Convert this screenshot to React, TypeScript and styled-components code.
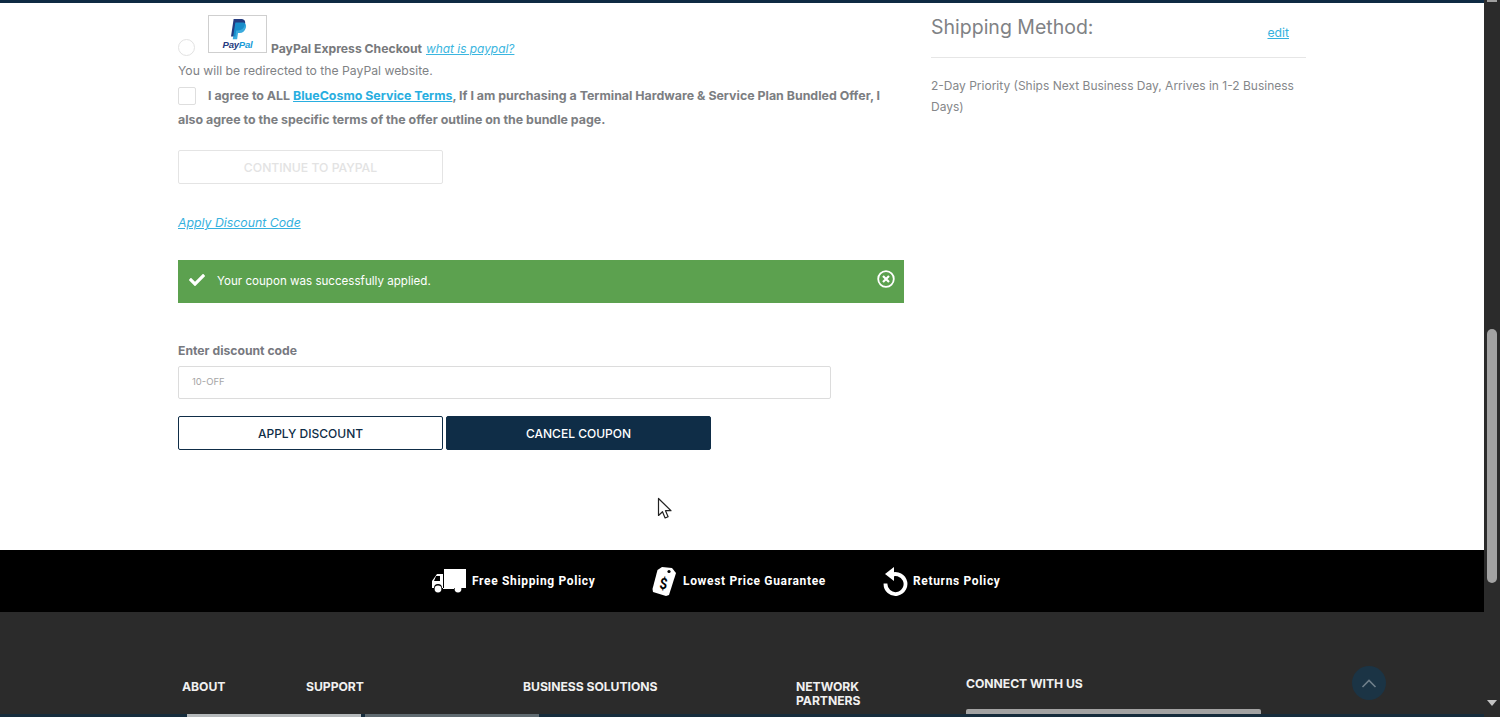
import React from "react";
import styled, { createGlobalStyle } from "styled-components";
import { FaCheck } from "react-icons/fa";

const Global = createGlobalStyle`
  html, body { margin: 0; padding: 0; height: 717px; overflow: hidden; background: #fff; }
  * { box-sizing: border-box; }
  body { font-family: Inter, "Liberation Sans", sans-serif; }
`;

const Page = styled.div`
  position: relative;
  display: flex;
  width: 1500px;
  height: 717px;
  overflow: hidden;
`;
const Main = styled.div`
  width: 1484px;
  display: flex;
  flex-direction: column;
  border-top: 3px solid #0e2a43;
`;
const Checkout = styled.div`
  height: 547px;
  flex: none;
  display: flex;
  padding-left: 178px;
`;
const LeftCol = styled.div`
  width: 726px;
  display: flex;
  flex-direction: column;
  padding-top: 12px;
`;
const RightCol = styled.div`
  width: 375px;
  margin-left: 27px;
`;
const PayRow = styled.div`
  display: flex;
  align-items: flex-end;
  height: 41px;
`;
const Radio = styled.span`
  width: 17px;
  height: 17px;
  border: 1px solid #e2e2e2;
  border-radius: 50%;
`;
const LogoBox = styled.div`
  width: 59px;
  height: 38px;
  margin: 0 4px 3px 13px;
  border: 1px solid #cfcfcf;
  display: flex;
  flex-direction: column;
  align-items: center;
  padding-top: 3px;
`;
const LogoText = styled.span`
  font-family: "Liberation Sans", sans-serif;
  font-size: 9.5px;
  line-height: 10px;
  font-weight: 700;
  font-style: italic;
  color: #253b80;
  letter-spacing: -0.2px;
  b { color: #179bd7; font-weight: 700; }
`;
const PayLabel = styled.span`
  font-size: 12.2px;
  line-height: 15px;
  font-weight: 700;
  color: #77797c;
`;
const WhatLink = styled.a`
  font-size: 11.9px;
  line-height: 15px;
  font-style: italic;
  color: #3bb6e0;
  text-decoration: underline;
  margin-left: 4px;
`;
const Redirect = styled.div`
  font-size: 12.2px;
  line-height: 16px;
  color: #808285;
  margin-top: 7px;
`;
const Terms = styled.div`
  position: relative;
  font-size: 12.4px;
  line-height: 24px;
  font-weight: 700;
  color: #7c7e82;
  text-indent: 30px;
  width: 726px;
  margin-top: 5px;
  a { color: #29aee0; text-decoration: underline; }
`;
const Check = styled.span`
  position: absolute;
  left: 0;
  top: 3px;
  width: 18px;
  height: 18px;
  border: 1px solid #dedede;
  border-radius: 2px;
`;
const GhostButton = styled.button`
  width: 265px;
  height: 34px;
  margin-top: 18px;
  background: #fff;
  border: 1px solid #e4e4e4;
  border-radius: 2px;
  font: 500 12.2px Inter, sans-serif;
  color: #e3e3e3;
  padding: 0;
`;
const ApplyLink = styled.a`
  font-size: 12.3px;
  line-height: 16px;
  font-style: italic;
  color: #35b1de;
  text-decoration: underline;
  margin-top: 31px;
  align-self: flex-start;
`;
const Alert = styled.div`
  height: 43px;
  margin-top: 29px;
  background: #5ca14f;
  color: #fff;
  display: flex;
  align-items: center;
  padding: 0 9px 0 11px;
  font-size: 11.6px;
  svg { flex: none; }
`;
const AlertText = styled.span`
  margin: 0 0 2px 12px;
  flex: 1;
`;
const AlertClose = styled.svg`
  margin-top: -5px;
`;
const FieldLabel = styled.label`
  font-size: 12.2px;
  line-height: 16px;
  font-weight: 700;
  color: #77797f;
  margin-top: 40px;
`;
const Input = styled.div`
  width: 653px;
  height: 33px;
  margin-top: 7px;
  border: 1px solid #dcdcdc;
  border-radius: 2px;
  padding-left: 13px;
  font-size: 9.5px;
  line-height: 29px;
  color: #a5a5a5;
`;
const Buttons = styled.div`
  display: flex;
  gap: 3px;
  margin-top: 17px;
`;
const ActionButton = styled.button<{ $solid?: boolean }>`
  width: 265px;
  height: 34px;
  border: 1px solid #0f2d47;
  border-radius: 2px;
  background: ${(p) => (p.$solid ? "#0f2d47" : "#fff")};
  color: ${(p) => (p.$solid ? "#fff" : "#0f2d47")};
  font: 500 12px Inter, sans-serif;
  padding: 0;
`;
const ShipHead = styled.div`
  display: flex;
  align-items: flex-end;
  justify-content: space-between;
  height: 55px;
  padding: 0 17px 16px 0;
  border-bottom: 1px solid #e6e6e6;
`;
const ShipTitle = styled.h3`
  margin: 0;
  font-size: 19.5px;
  line-height: 26px;
  font-weight: 400;
  color: #808285;
  position: relative;
  top: -1px;
`;
const EditLink = styled.a`
  font-size: 12.2px;
  line-height: 16px;
  color: #35b1de;
  text-decoration: underline;
`;
const ShipText = styled.p`
  margin: 17px 0 0;
  font-size: 12px;
  line-height: 21px;
  color: #85878a;
`;
const Strip = styled.div`
  height: 62px;
  flex: none;
  background: #000;
  display: flex;
  padding: 0 0 1px 431px;
  align-items: center;
`;
const Policy = styled.div<{ $w: number }>`
  width: ${(p) => p.$w}px;
  display: flex;
  align-items: center;
  color: #fff;
  font-family: Roboto, sans-serif;
  font-size: 12px;
  font-weight: 700;
  letter-spacing: 0.66px;
`;
const PolicyLabel = styled.span<{ $gap: number }>`
  margin-left: ${(p) => p.$gap}px;
`;
const Footer = styled.div`
  flex: 1;
  min-height: 0;
  background: #2b2b2b;
  display: flex;
  flex-direction: column;
`;
const FooterBody = styled.div`
  height: 102px;
  display: flex;
  padding: 68px 0 0 182px;
`;
const FootCol = styled.div<{ $w: number }>`
  width: ${(p) => p.$w}px;
  padding-right: 60px;
  color: #f0f0f0;
  font-size: 12.2px;
  line-height: 14px;
  font-weight: 700;
  letter-spacing: -0.05px;
`;
const BusinessCol = styled(FootCol)`
  padding-right: 0;
`;
const ConnectCol = styled.div`
  width: 295px;
  margin-top: -3px;
  display: flex;
  flex-direction: column;
  color: #f0f0f0;
  font-size: 12.2px;
  line-height: 14px;
  font-weight: 700;
  letter-spacing: -0.05px;
`;
const ConnectBar = styled.div`
  height: 7px;
  margin-top: 18px;
  background: #a3a3a3;
  border-radius: 2px 2px 0 0;
`;
const FooterEdge = styled.div`
  height: 3px;
  background: #162c3c;
  display: flex;
  gap: 4px;
  padding-left: 187px;
`;
const EdgeTab = styled.span<{ $c: string }>`
  width: 174px;
  height: 3px;
  background: ${(p) => p.$c};
`;
const ToTop = styled.div`
  position: absolute;
  left: 1352px;
  top: 666px;
  width: 34px;
  height: 34px;
  border-radius: 50%;
  background: #1b3445;
  display: flex;
  align-items: center;
  justify-content: center;
`;
const Scrollbar = styled.div`
  width: 16px;
  background: #2b2b2b;
  display: flex;
  flex-direction: column;
  align-items: center;
`;
const ScrollCap = styled.div`
  width: 10px;
  height: 2px;
  background: #a0a0a0;
`;
const Thumb = styled.div`
  width: 10px;
  height: 254px;
  margin-top: 327px;
  border-radius: 5px;
  background: #a3a3a3;
`;
const ScrollArrow = styled.svg`
  margin-top: 117px;
`;
const Cursor = styled.svg`
  position: absolute;
  left: 657px;
  top: 497px;
`;

export default function App() {
  return (
    <Page>
      <Global />
      <Main>
        <Checkout>
          <LeftCol>
            <PayRow>
              <Radio />
              <LogoBox>
                <svg width="20" height="21" viewBox="0 0 20 24">
                  <path d="M5 0h8c4 0 6 2 5 6-1 5-4 7-8 7H8l-1 7H2z" fill="#253b80" />
                  <path d="M7 4h8c3 0 5 2 4 6-1 4-4 6-7 6h-2l-1 7H4z" fill="#179bd7" opacity=".85" />
                </svg>
                <LogoText>Pay<b>Pal</b></LogoText>
              </LogoBox>
              <PayLabel>PayPal Express Checkout</PayLabel>
              <WhatLink>what is paypal?</WhatLink>
            </PayRow>
            <Redirect>You will be redirected to the PayPal website.</Redirect>
            <Terms>
              <Check />
              I agree to ALL <a>BlueCosmo Service Terms</a>, If I am purchasing a Terminal Hardware &amp; Service Plan Bundled Offer, I also agree to the specific terms of the offer outline on the bundle page.
            </Terms>
            <GhostButton>CONTINUE TO PAYPAL</GhostButton>
            <ApplyLink>Apply Discount Code</ApplyLink>
            <Alert>
              <FaCheck size={16} color="#fff" style={{ marginTop: -4 }} />
              <AlertText>Your coupon was successfully applied.</AlertText>
              <AlertClose width="18" height="18" viewBox="0 0 18 18" fill="none" stroke="#fff">
                <circle cx="9" cy="9" r="7.8" strokeWidth="1.8" />
                <path d="M6 6l6 6M12 6l-6 6" strokeWidth="2.2" />
              </AlertClose>
            </Alert>
            <FieldLabel>Enter discount code</FieldLabel>
            <Input>10-OFF</Input>
            <Buttons>
              <ActionButton>APPLY DISCOUNT</ActionButton>
              <ActionButton $solid>CANCEL COUPON</ActionButton>
            </Buttons>
          </LeftCol>
          <RightCol>
            <ShipHead>
              <ShipTitle>Shipping Method:</ShipTitle>
              <EditLink>edit</EditLink>
            </ShipHead>
            <ShipText>2-Day Priority (Ships Next Business Day, Arrives in 1-2 Business Days)</ShipText>
          </RightCol>
        </Checkout>
        <Strip>
          <Policy $w={221}>
            <svg width="36" height="26" viewBox="0 0 36 26" fill="#fff">
              <path d="M13 1h22v19H13z" />
              <path d="M11 6H6L1 13v7h2a4 4 0 0 1 8 0h1V6z" />
              <path d="M5 8h4v5H3z" fill="#000" />
              <circle cx="7" cy="21" r="3.4" />
              <circle cx="27" cy="21" r="3.4" />
              <path d="M12 20h11v1H12z" />
            </svg>
            <PolicyLabel $gap={5}>Free Shipping Policy</PolicyLabel>
          </Policy>
          <Policy $w={230}>
            <svg width="26" height="32" viewBox="0 0 26 32">
              <path d="M10 2l10 1 4 5-7 22-3 1-13-4-0.500-3 5-19z" fill="#fff" />
              <circle cx="17" cy="6.500" r="1.600" fill="#000" />
              <text x="7.500" y="24" fontSize="14" fontWeight="700" fontStyle="italic" fill="#000" fontFamily="Roboto, sans-serif">$</text>
            </svg>
            <PolicyLabel $gap={5}>Lowest Price Guarantee</PolicyLabel>
          </Policy>
          <Policy $w={130}>
            <svg width="26" height="30" viewBox="0 0 26 30" fill="none">
              <path d="M7.500 10a10 10 0 1 1-4 7.500" stroke="#fff" strokeWidth="3.800" />
              <path d="M12 1v14L3 8z" fill="#fff" />
            </svg>
            <PolicyLabel $gap={5}>Returns Policy</PolicyLabel>
          </Policy>
        </Strip>
        <Footer>
          <FooterBody>
            <FootCol $w={124}>ABOUT</FootCol>
            <FootCol $w={217}>SUPPORT</FootCol>
            <BusinessCol $w={273}>BUSINESS SOLUTIONS</BusinessCol>
            <FootCol $w={170}>NETWORK PARTNERS</FootCol>
            <ConnectCol>
              CONNECT WITH US
              <ConnectBar />
            </ConnectCol>
          </FooterBody>
          <FooterEdge>
            <EdgeTab $c="#b5b9bb" />
            <EdgeTab $c="#5f6a70" />
          </FooterEdge>
        </Footer>
      </Main>
      <Scrollbar>
        <ScrollCap />
        <Thumb />
        <ScrollArrow width="10" height="6" viewBox="0 0 10 6">
          <path d="M0 0h10L5 6z" fill="#c4c4c4" />
        </ScrollArrow>
      </Scrollbar>
      <ToTop>
        <svg width="16" height="9" viewBox="0 0 16 9" fill="none">
          <path d="M1.500 8L8 1.500 14.500 8" stroke="#6f7f8a" strokeWidth="1.600" />
        </svg>
      </ToTop>
      <Cursor width="16" height="24" viewBox="0 0 16 24">
        <path d="M1.500 1.500v17l4-3.800 2.600 6.300 3-1.300-2.600-6h5.500z" fill="#fff" stroke="#222" strokeWidth="1.200" strokeLinejoin="round" />
      </Cursor>
    </Page>
  );
}
